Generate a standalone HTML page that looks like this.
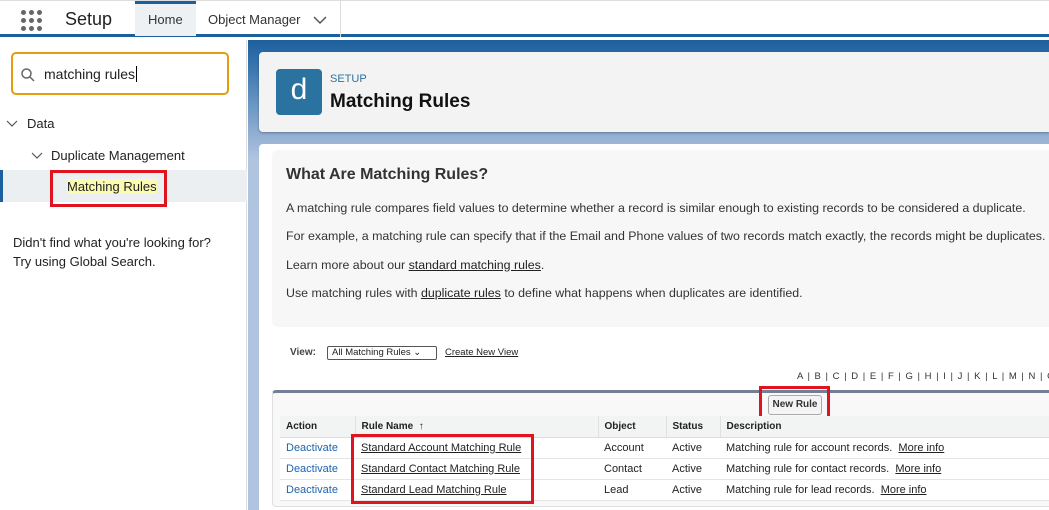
<!DOCTYPE html>
<html><head><style>
*{margin:0;padding:0;box-sizing:border-box}
body{width:1049px;height:510px;overflow:hidden;font-family:"Liberation Sans",Arial,sans-serif;background:#fff;position:relative}
.a{position:absolute}
.top{left:0;top:0;width:1049px;height:37px;background:#fff;border-bottom:3px solid #1b5f9e;border-top:1px solid #ddd}
.dots{left:21px;top:10px;width:22px;height:22px}
.dots i{position:absolute;width:5px;height:5px;border-radius:50%;background:#666}
a,u{color:#222}
.tbl td{font-size:11px;color:#222;height:21px;border-bottom:1px solid #e5e5e5;padding-left:6px}
.tbl th{font-size:10px;font-weight:bold;text-align:left;color:#222;background:#f2f3f3;height:21px;padding-left:6px;border-bottom:1px solid #ddd;border-left:1px solid #e0e0e0}
.tbl td.blue{color:#1b65b0}
</style></head><body>
<div class="a top"></div>
<div class="a dots"><i style="left:0;top:0"></i><i style="left:8px;top:0"></i><i style="left:16px;top:0"></i><i style="left:0;top:8px"></i><i style="left:8px;top:8px"></i><i style="left:16px;top:8px"></i><i style="left:0;top:16px"></i><i style="left:8px;top:16px"></i><i style="left:16px;top:16px"></i></div>
<div class="a" style="left:65px;top:9px;font-size:18px;color:#222">Setup</div>
<div class="a" style="left:135px;top:1px;width:61px;height:35px;background:#eef1f4;border-top:3px solid #1b5f9e;font-size:13px;color:#333;padding:8px 0 0 13px">Home</div>
<div class="a" style="left:208px;top:12px;font-size:13px;color:#333">Object Manager</div>
<svg class="a" style="left:313px;top:15px" width="14" height="10"><path d="M1 2l6 6 6-6" stroke="#555" stroke-width="1.5" fill="none"/></svg>
<div class="a" style="left:340px;top:1px;width:1px;height:36px;background:#ddd"></div>
<div class="a" style="left:0;top:40px;width:247px;height:470px;background:#fff;border-right:1px solid #ddd"></div>
<div class="a" style="left:11px;top:52px;width:218px;height:43px;border:2px solid #e59c0e;border-radius:5px"></div>
<svg class="a" style="left:20px;top:67px" width="16" height="16"><circle cx="6.5" cy="6.5" r="4.5" stroke="#666" stroke-width="1.5" fill="none"/><path d="M10 10l4 4" stroke="#666" stroke-width="1.5"/></svg>
<div class="a" style="left:44px;top:66px;font-size:14px;color:#222">matching rules<span style="border-left:1px solid #000;margin-left:1px"></span></div>
<svg class="a" style="left:6px;top:120px" width="12" height="8"><path d="M1 1l5 5 5-5" stroke="#555" stroke-width="1.2" fill="none"/></svg>
<div class="a" style="left:27px;top:116px;font-size:13px;color:#222">Data</div>
<svg class="a" style="left:31px;top:152px" width="12" height="8"><path d="M1 1l5 5 5-5" stroke="#555" stroke-width="1.2" fill="none"/></svg>
<div class="a" style="left:51px;top:148px;font-size:13px;color:#222">Duplicate Management</div>
<div class="a" style="left:0;top:170px;width:247px;height:32px;background:#ebeff2;border-left:3px solid #1b5f9e"></div>
<div class="a" style="left:50px;top:170px;width:117px;height:37px;border:3px solid #e0141e"></div>
<div class="a" style="left:67px;top:179px;font-size:13px;color:#222;background:#fafab0">Matching Rules</div>
<div class="a" style="left:13px;top:233px;font-size:13px;color:#222;line-height:19px">Didn't find what you're looking for?<br>Try using Global Search.</div>
<div class="a" style="left:248px;top:40px;width:801px;height:470px;background:linear-gradient(#1d5f9d 0,#3d78b0 30px,#8cabd1 90px,#b0c4df 120px,#b0c4df 100%)"></div>
<div class="a" style="left:259px;top:52px;width:790px;height:80px;background:#f3f3f3;border-radius:4px 0 0 4px;box-shadow:0 1px 2px rgba(0,0,0,.3)"></div>
<div class="a" style="left:276px;top:69px;width:46px;height:46px;background:#2a73a1;border-radius:4px;color:#fff;font-size:30px;text-align:center;line-height:42px">d</div>
<div class="a" style="left:330px;top:73px;font-size:11px;color:#2a73a1">SETUP</div>
<div class="a" style="left:330px;top:91px;font-size:19px;font-weight:bold;color:#111">Matching Rules</div>
<div class="a" style="left:259px;top:144px;width:790px;height:366px;background:#fff;border-radius:4px 0 0 0"></div>
<div class="a" style="left:272px;top:150px;width:777px;height:177px;background:#f7f7f7;border-radius:6px 0 0 6px"></div>
<div class="a" style="left:286px;top:166px;font-size:16px;font-weight:bold;color:#333">What Are Matching Rules?</div>
<div class="a" style="left:286px;top:194px;font-size:12.4px;color:#333;line-height:28.3px;white-space:nowrap">A matching rule compares field values to determine whether a record is similar enough to existing records to be considered a duplicate.<br>For example, a matching rule can specify that if the Email and Phone values of two records match exactly, the records might be duplicates.<br>Learn more about our <u>standard matching rules</u>.<br>Use matching rules with <u>duplicate rules</u> to define what happens when duplicates are identified.</div>
<div class="a" style="left:290px;top:347px;font-size:10px;font-weight:bold;color:#444">View:</div>
<div class="a" style="left:327px;top:346px;width:110px;height:14px;border:1px solid #555;border-radius:2px;font-size:9.5px;color:#222;padding-left:4px;line-height:12px">All Matching Rules ⌄</div>
<div class="a" style="left:445px;top:347px;font-size:9.5px;color:#222;text-decoration:underline">Create New View</div>
<div class="a" style="left:797px;top:371px;font-size:9.5px;color:#333;word-spacing:2px;white-space:nowrap">A | B | C | D | E | F | G | H | I | J | K | L | M | N | O</div>
<div class="a" style="left:272px;top:390px;width:777px;height:117px;background:#f8f8f8;border-top:3px solid #737f96;border-left:1px solid #e0e0e0;border-bottom:1px solid #e0e0e0;border-radius:4px 0 0 4px"></div>
<div class="a" style="left:768px;top:395px;width:54px;height:20px;border:1px solid #aaa;border-radius:3px;background:#f4f4f4;font-size:10px;font-weight:bold;color:#333;text-align:center;line-height:18px">New Rule</div>
<div class="a" style="left:759px;top:386px;width:71px;height:33px;border:3px solid #e0141e"></div>
<table class="a tbl" style="left:280px;top:416px;width:769px;border-collapse:collapse;background:#fff">
<tr><th style="width:75px;border-left:none">Action</th><th style="width:243px">Rule Name &nbsp;↑</th><th style="width:68px">Object</th><th style="width:54px">Status</th><th>Description</th></tr>
<tr><td class="blue">Deactivate</td><td><u>Standard Account Matching Rule</u></td><td>Account</td><td>Active</td><td>Matching rule for account records. &nbsp;<u>More info</u></td></tr>
<tr><td class="blue">Deactivate</td><td><u>Standard Contact Matching Rule</u></td><td>Contact</td><td>Active</td><td>Matching rule for contact records. &nbsp;<u>More info</u></td></tr>
<tr><td class="blue">Deactivate</td><td><u>Standard Lead Matching Rule</u></td><td>Lead</td><td>Active</td><td>Matching rule for lead records. &nbsp;<u>More info</u></td></tr>
</table>
<div class="a" style="left:351px;top:434px;width:183px;height:70px;border:3px solid #e0141e"></div>
</body></html>
